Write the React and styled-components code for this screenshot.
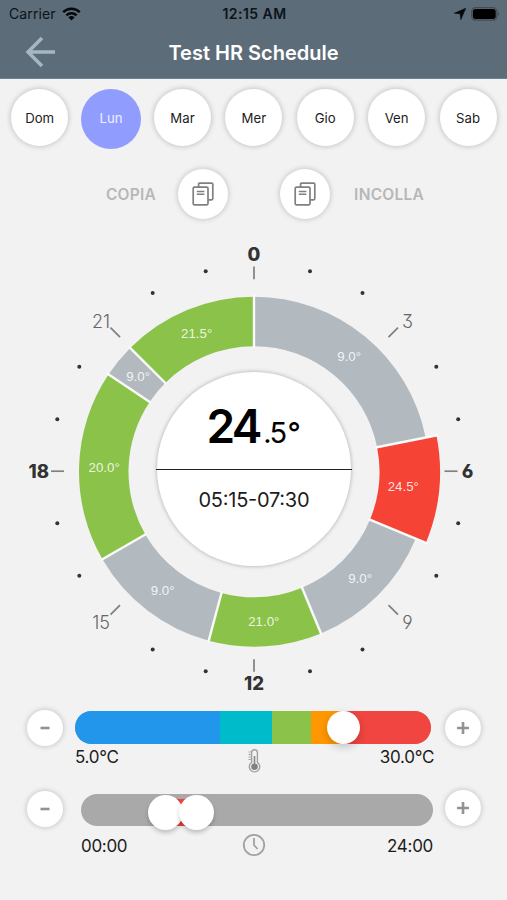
import React, {Component} from 'react'
import styled, {createGlobalStyle} from 'styled-components'

const GlobalStyle = createGlobalStyle`
  * {
    box-sizing: border-box;
  }
  body {
    margin: 0;
    background: #f2f2f2;
    font-family: Inter, 'Liberation Sans', sans-serif;
  }
`
const Screen = styled.div`
  width: 507px;
  height: 900px;
  overflow: hidden;
  background: #f2f2f2;
  color: #1c1c1c;
`
const Header = styled.header`
  height: 79px;
  background: #5c6c78;
  border-bottom: 1px solid #6d8292;
`
const StatusBar = styled.div`
  display: grid;
  grid-template-columns: 1fr auto 1fr;
  align-items: center;
  height: 27px;
  padding: 0 7px 0 9px;
  color: #0d1318;
`
const Carrier = styled.div`
  display: flex;
  align-items: center;
  gap: 6px;
  font-size: 14px;
  letter-spacing: 0.1px;
`
const Clock = styled.div`
  font-size: 14px;
  font-weight: 600;
  letter-spacing: 0.45px;
`
const StatusIcons = styled.div`
  display: flex;
  align-items: center;
  justify-content: flex-end;
  gap: 5px;
`
const TitleBar = styled.div`
  display: grid;
  grid-template-columns: 80px 1fr 80px;
  align-items: center;
  height: 50px;
`
const BackButton = styled.button`
  display: flex;
  padding: 0 0 0 24px;
  border: 0;
  background: none;
`
const Title = styled.h1`
  margin: 0;
  padding-top: 1px;
  text-align: center;
  font-size: 20px;
  font-weight: 600;
  color: #fff;
  white-space: nowrap;
`
const Days = styled.div`
  display: grid;
  grid-template-columns: repeat(7, 71.4px);
  justify-items: center;
  align-items: center;
  height: 79px;
  padding-left: 4px;
`
const Day = styled.button`
  width: ${p => p.$selected ? 60 : 57}px;
  height: ${p => p.$selected ? 60 : 57}px;
  margin: ${p => p.$selected ? 0 : '0 0 2px'};
  padding: ${p => p.$selected ? '0 0 2px' : 0};
  border: 0;
  border-radius: 50%;
  background: ${p => p.$selected ? '#909dff' : '#fff'};
  color: ${p => p.$selected ? '#eef0ff' : '#1c1c1c'};
  box-shadow: ${p => p.$selected ? 'none' : '0 0 5px 1px rgba(0, 0, 0, 0.18)'};
  font-family: inherit;
  font-size: 13.2px;
`
const CopyRow = styled.div`
  display: flex;
  align-items: center;
  justify-content: center;
  gap: 52px;
  height: 72px;
  padding-left: 23px;
`
const CopyGroup = styled.div`
  display: flex;
  flex-direction: ${p => p.$reverse ? 'row-reverse' : 'row'};
  align-items: center;
  gap: ${p => p.$reverse ? 24 : 22}px;
  color: #b7b7b7;
  font-size: 15.5px;
  font-weight: 600;
  letter-spacing: 0.25px;
`
const RoundButton = styled.button`
  display: flex;
  flex: none;
  align-items: center;
  justify-content: center;
  width: ${p => p.$size}px;
  height: ${p => p.$size}px;
  padding: 0;
  border: 0;
  border-radius: 50%;
  background: #fff;
  box-shadow: 0 0 5px 1px rgba(0, 0, 0, 0.17);
`
const Dial = styled.svg`
  display: block;
  width: 507px;
  height: 470px;
`
const TickLabel = styled.text`
  font-family: Inter, sans-serif;
  font-size: ${p => p.$major ? 18.5 : 18}px;
  font-weight: ${p => p.$major ? 800 : 300};
  font-feature-settings: 'cv09', 'ss01';
  fill: ${p => p.$major ? '#333' : '#666'};
  text-anchor: middle;
`
const SliceLabel = styled.text`
  font-family: 'Liberation Sans', sans-serif;
  font-size: 13.3px;
  fill: #fff;
  fill-opacity: 0.85;
  text-anchor: middle;
`
const Disc = styled.circle`
  fill: #fff;
  filter: drop-shadow(0 0 2px rgba(0, 0, 0, 0.3));
`
const Readout = styled.text`
  font-size: ${p => p.$size}px;
  font-weight: ${p => p.$weight};
  fill: ${p => p.$color || '#000'};
`
const SliderRow = styled.div`
  display: grid;
  grid-template-columns: 36px 1fr 36px;
  align-items: start;
  height: ${p => p.$height}px;
  padding: 0 26px 0 27px;
`
const SliderBody = styled.div`
  margin: ${p => p.$margin};
`
const StepButton = styled(RoundButton)`
  margin-top: ${p => p.$top}px;
`
const Track = styled.div`
  position: relative;
  height: ${p => p.$height}px;
  border-radius: 17px;
  background: #a9a9a9;
`
const Bands = styled.div`
  display: flex;
  height: 100%;
  overflow: hidden;
  border-radius: 17px;
`
const Band = styled.div`
  flex: ${p => p.$span} 0 0;
  background: ${p => p.$color};
`
const Range = styled.div`
  position: absolute;
  top: 5px;
  height: 27px;
  background: #f04438;
`
const Thumb = styled.div`
  position: absolute;
  top: ${p => p.$top}px;
  width: ${p => p.$size}px;
  height: ${p => p.$size}px;
  margin-left: ${p => p.$size / -2}px;
  border-radius: 50%;
  background: #fff;
  box-shadow: 0 3px ${p => p.$blur}px rgba(0, 0, 0, 0.2);
`
const Limits = styled.div`
  display: grid;
  grid-template-columns: 1fr auto 1fr;
  align-items: center;
  height: ${p => p.$height}px;
  margin: ${p => p.$margin};
  font-size: 17px;
  letter-spacing: -0.3px;
  span:last-child {
    text-align: right;
  }
  svg {
    margin: ${p => p.$iconMargin};
  }
`

const days = ['Dom', 'Lun', 'Mar', 'Mer', 'Gio', 'Ven', 'Sab']

const slices = [
  {from: 0, to: 5.25, temp: 9, color: '#b2bac0'},
  {from: 5.25, to: 7.5, temp: 24.5, color: '#f54336', selected: true},
  {from: 7.5, to: 10.5, temp: 9, color: '#b2bac0'},
  {from: 10.5, to: 13, temp: 21, color: '#8bc34a'},
  {from: 13, to: 16, temp: 9, color: '#b2bac0'},
  {from: 16, to: 20.25, temp: 20, color: '#8bc34a'},
  {from: 20.25, to: 21, temp: 9, color: '#b2bac0'},
  {from: 21, to: 24, temp: 21.5, color: '#8bc34a'}
]

const bands = [
  {span: 145, color: '#2196eb'},
  {span: 52, color: '#00bbc9'},
  {span: 39, color: '#8bc34a'},
  {span: 33, color: '#ff9800'},
  {span: 87, color: '#f04540'}
]

// the hour dots sit slightly closer on the left half: [right x, left x, y]
const dots = [
  [56, -48.3, 200],
  [108.5, -101.3, 178.2],
  [182.3, -174.7, 104.5],
  [204.2, -196.7, 52]
]

const ticks = [
  {hour: 0, x: 0, y: -210.8, line: [0, -205.3, 0, -192.5], major: true},
  {hour: 3, x: 153.5, y: -144, line: [134.5, -134.5, 144, -144]},
  {hour: 6, x: 213.5, y: 6.3, line: [190.5, -0.5, 203.5, -0.5], major: true},
  {hour: 9, x: 153.5, y: 157.3, line: [134.5, 133.5, 144, 143]},
  {hour: 12, x: 0, y: 218.8, line: [0, 187.5, 0, 200], major: true},
  {hour: 15, x: -153, y: 157.3, line: [-134, 133.5, -143.5, 143]},
  {hour: 18, x: -215.3, y: 6.3, line: [-203, -0.5, -190, -0.5], major: true},
  {hour: 21, x: -153, y: -144, line: [-134, -134.5, -143.5, -144]}
]

const point = (hour, r) => {
  const a = hour / 24 * Math.PI * 2
  return [Math.sin(a) * r, -Math.cos(a) * r]
}

const slicePath = ({from, to, selected}) => {
  const outer = selected ? 186 : 175
  const inner = 125.5
  return `M${point(from, outer)} A${outer} ${outer} 0 0 1 ${point(to, outer)}` +
    ` L${point(to, inner)} A${inner} ${inner} 0 0 0 ${point(from, inner)} Z`
}

const WifiIcon = () => (
  <svg width="19" height="14" viewBox="0 0 19 14">
    <g fill="none" stroke="#05090c" strokeWidth="2.5">
      <path d="M1.2 5.2C5.8 0.6 13.2 0.6 17.8 5.2" />
      <path d="M4.4 8.3C7.2 5.5 11.8 5.5 14.6 8.3" />
    </g>
    <path d="M6.3 10.2Q9.5 7.6 12.7 10.2L9.5 13.6Z" fill="#05090c" />
  </svg>
)

const LocationIcon = () => (
  <svg width="12" height="12" viewBox="0 0 12 12">
    <path d="M11.7 0.3L6.8 11.6L6.2 5.8L0.4 5.2Z" fill="#05090c" stroke="#05090c" strokeWidth="0.6" />
  </svg>
)

const BatteryIcon = () => (
  <svg width="29" height="14" viewBox="0 0 29 14">
    <rect x="0.7" y="0.7" width="25.2" height="12.4" rx="3.8" fill="none" stroke="#414c55" strokeWidth="1.2" />
    <rect x="1.9" y="1.9" width="22.8" height="10" rx="2.6" fill="#000" />
    <path d="M27 4.6Q29 6.9 27 9.2Z" fill="#414c55" />
  </svg>
)

const BackIcon = () => (
  <svg width="32" height="32" viewBox="0 0 32 32" fill="none" stroke="#a3b7c5" strokeWidth="3.5">
    <path d="M18 2L4 16L18 30M4 16H31" />
  </svg>
)

const CopyIcon = () => (
  <svg width="22" height="24" viewBox="0 0 22 24" fill="none" stroke="#808080" strokeWidth="1.7">
    <path d="M6.6 5V2.2Q6.6 1.2 7.6 1.2H19.6Q20.8 1.2 20.8 2.2V16.6Q20.8 17.8 19.6 17.8H16" />
    <rect x="1.2" y="5.2" width="14.8" height="17.6" rx="1.2" />
    <path d="M4.8 9.4H12.4M4.8 12.2H12.4" strokeWidth="1.5" />
  </svg>
)

const ThermometerIcon = () => (
  <svg width="14" height="24" viewBox="0 0 14 24" fill="none" stroke="#a0a0a0" strokeWidth="1.4">
    <path d="M4.6 13.4V3.6A2.9 2.9 0 0 1 10.4 3.6V13.4A5.2 5.2 0 1 1 4.6 13.4Z" />
    <circle cx="7.5" cy="17.8" r="2.6" fill="#808080" stroke="#808080" />
    <path d="M7.5 7V16" stroke="#8c8c8c" strokeWidth="1.7" />
    <path d="M1.5 3H3.8M1.5 5.5H3.8M1.5 8H3.8M1.5 10.5H3.8" strokeWidth="1.1" />
  </svg>
)

const ClockIcon = () => (
  <svg width="24" height="24" viewBox="0 0 24 24" fill="none" stroke="#a2a2a2" strokeWidth="1.8">
    <circle cx="12" cy="12" r="10.2" />
    <path d="M12 5V12L15.6 16" />
  </svg>
)

const StepIcon = ({plus}) => (
  <svg width="14" height="14" viewBox="0 0 14 14" stroke="#929292" strokeWidth="2.6">
    <path d={plus ? 'M1 7H13M7 1V13' : 'M2.5 7H11.5'} />
  </svg>
)

const ScheduleDial = () => (
  <Dial viewBox="0 0 507 470">
    <g transform="translate(254 241.7)">
      {slices.map(slice => (
        <path key={slice.from} d={slicePath(slice)} fill={slice.color} />
      ))}
      {slices.map(({from, selected}, i) => {
        const long = selected || slices[(i + 7) % 8].selected
        const [x1, y1] = point(from, 124)
        const [x2, y2] = point(from, long ? 188 : 177)
        return <line key={from} x1={x1} y1={y1} x2={x2} y2={y2} stroke="#fafafa" strokeWidth="2.4" />
      })}
      {slices.map(({from, to, temp}) => {
        const [x, y] = point((from + to) / 2, 150)
        return <SliceLabel key={from} x={x} y={y + 4.8}>{temp.toFixed(1)}°</SliceLabel>
      })}
      {dots.map(([right, left, y]) => [[right, y], [right, -y], [left, y], [left, -y]].map(([cx, cy]) => (
        <circle key={`${cx}${cy}`} cx={cx} cy={cy - 0.4} r="2" fill="#333" />
      )))}
      {ticks.map(({hour, x, y, line, major}) => (
        <g key={hour}>
          <line x1={line[0]} y1={line[1]} x2={line[2]} y2={line[3]} stroke="#808080" strokeWidth="1.7" />
          <TickLabel x={x} y={y} $major={major}>{hour}</TickLabel>
        </g>
      ))}
      <Disc cx="0" cy="-2.7" r="97" />
      <line x1="-98" y1="-2.2" x2="98" y2="-2.2" stroke="#222" strokeWidth="1.2" />
      <Readout x="-47.5" y="-28.7" textLength="56" $size={46} $weight={600}>24</Readout>
      <Readout x="9.2" y="-28.7" textLength="24" $size={29} $weight={400}>.5</Readout>
      <Readout x="33.5" y="-28.7" $size={29} $weight={500}>°</Readout>
      <Readout x="-55.5" y="35.7" textLength="111" $size={20} $weight={400} $color="#1c1c1c">05:15-07:30</Readout>
    </g>
  </Dial>
)

export class App extends Component {
  state = {
    day: 'Lun'
  }
  onSelectDay = (day) => {
    this.setState({day})
  }
  render () {
    return (
      <Screen>
        <GlobalStyle />
        <Header>
          <StatusBar>
            <Carrier>Carrier <WifiIcon /></Carrier>
            <Clock>12:15 AM</Clock>
            <StatusIcons>
              <LocationIcon />
              <BatteryIcon />
            </StatusIcons>
          </StatusBar>
          <TitleBar>
            <BackButton><BackIcon /></BackButton>
            <Title>Test HR Schedule</Title>
          </TitleBar>
        </Header>
        <Days>
          {days.map(day => (
            <Day key={day} $selected={day === this.state.day} onClick={() => this.onSelectDay(day)}>{day}</Day>
          ))}
        </Days>
        <CopyRow>
          <CopyGroup>
            COPIA
            <RoundButton $size={50}><CopyIcon /></RoundButton>
          </CopyGroup>
          <CopyGroup $reverse>
            INCOLLA
            <RoundButton $size={50}><CopyIcon /></RoundButton>
          </CopyGroup>
        </CopyRow>
        <ScheduleDial />
        <SliderRow $height={83}>
          <StepButton $size={36} $top={10}><StepIcon /></StepButton>
          <SliderBody $margin="11px 14px 0 12px">
            <Track $height={33}>
              <Bands>
                {bands.map(({span, color}) => (
                  <Band key={color} $span={span} $color={color} />
                ))}
              </Bands>
              <Thumb $size={33} $top={0} $blur={8} style={{left: '75.5%'}} />
            </Track>
            <Limits $height={26} $margin="0 -3px 0 0" $iconMargin="4px 1px -4px -1px">
              <span>5.0°C</span>
              <ThermometerIcon />
              <span>30.0°C</span>
            </Limits>
          </SliderBody>
          <StepButton $size={36} $top={10}><StepIcon plus /></StepButton>
        </SliderRow>
        <SliderRow $height={90}>
          <StepButton $size={36} $top={8}><StepIcon /></StepButton>
          <SliderBody $margin="11px 12px 0 18px">
            <Track $height={32}>
              <Range style={{left: '24%', width: '9%'}} />
              <Thumb $size={35} $top={1} $blur={4} style={{left: '24.1%'}} />
              <Thumb $size={35} $top={1} $blur={4} style={{left: '32.8%'}} />
            </Track>
            <Limits $height={40} $margin="0" $iconMargin="-1px 3px 1px -3px">
              <span>00:00</span>
              <ClockIcon />
              <span>24:00</span>
            </Limits>
          </SliderBody>
          <StepButton $size={36} $top={7}><StepIcon plus /></StepButton>
        </SliderRow>
      </Screen>
    )
  }
}
export default App
